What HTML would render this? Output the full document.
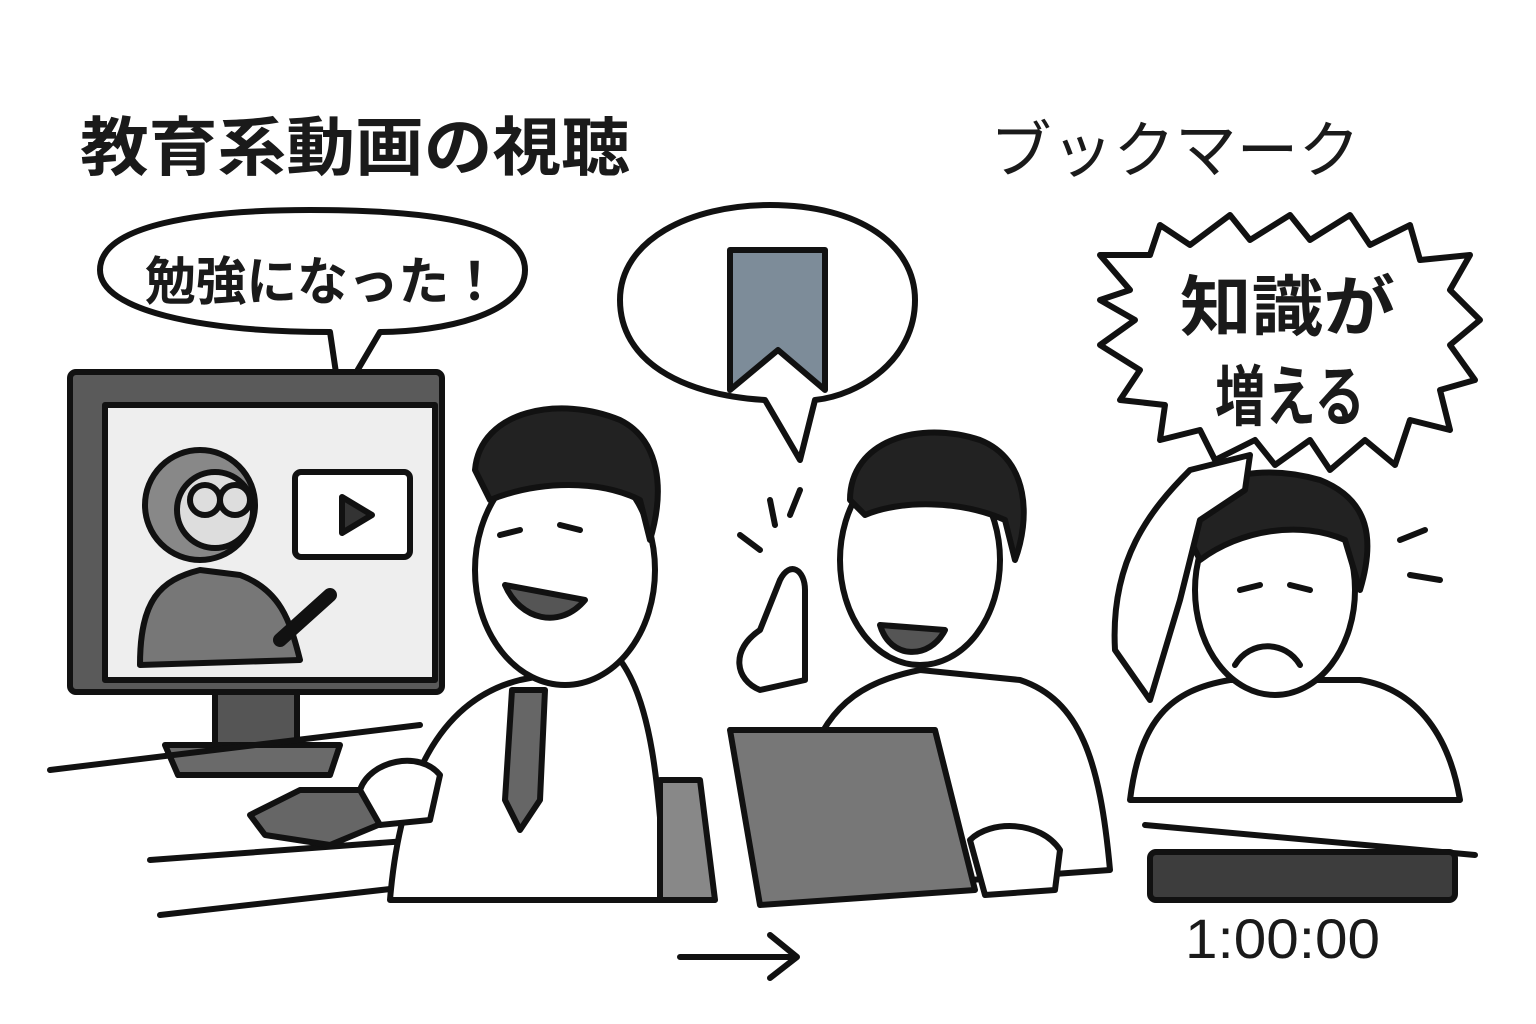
<!DOCTYPE html>
<html><head><meta charset="utf-8"><style>
html,body{margin:0;padding:0;background:#fff;}
svg{display:block}
text{font-family:"Liberation Sans","Noto Sans CJK JP",sans-serif;font-weight:bold;fill:#1a1a1a}
</style></head><body>
<svg width="1536" height="1024" viewBox="0 0 1536 1024" xmlns="http://www.w3.org/2000/svg">
<rect width="1536" height="1024" fill="#fff"/>
<g stroke="#111" stroke-width="6" stroke-linecap="round" stroke-linejoin="round" fill="none">
<!-- titles -->
</g>
<text x="80" y="170" font-size="64" textLength="550" lengthAdjust="spacingAndGlyphs">教育系動画の視聴</text>
<text x="990" y="172" font-size="62" font-weight="normal" textLength="370" lengthAdjust="spacingAndGlyphs" style="font-weight:normal">ブックマーク</text>

<g stroke="#111" stroke-width="6" stroke-linecap="round" stroke-linejoin="round">
<!-- left bubble -->
<path d="M330,332 C200,332 100,310 100,270 C100,225 200,210 310,210 C440,210 525,225 525,270 C525,315 440,332 380,332 L340,400 Z" fill="#fff"/>
<!-- middle bubble -->
<path d="M765,400 C680,395 620,360 620,300 C620,240 690,205 770,205 C860,205 915,245 915,300 C915,360 860,395 815,400 L800,460 Z" fill="#fff"/>
<path d="M730,250 L825,250 L825,390 L778,350 L730,390 Z" fill="#7d8c99"/>
<!-- spiky bubble -->
<path d="M1130,290 L1100,255 L1150,255 L1160,225 L1190,245 L1230,215 L1250,240 L1290,215 L1310,240 L1350,215 L1370,245 L1410,225 L1420,260 L1470,255 L1450,290 L1480,320 L1450,345 L1475,380 L1440,390 L1450,430 L1410,420 L1395,465 L1365,440 L1330,470 L1310,440 L1275,465 L1255,440 L1215,460 L1200,430 L1160,440 L1165,405 L1120,400 L1140,370 L1100,345 L1135,320 L1100,300 Z" fill="#fff"/>
<!-- monitor -->
<rect x="70" y="372" width="372" height="320" rx="6" fill="#5a5a5a"/>
<rect x="105" y="405" width="330" height="275" fill="#eee"/>
<rect x="215" y="692" width="82" height="55" fill="#555"/>
<path d="M165,745 L340,745 L330,775 L178,775 Z" fill="#6a6a6a"/>
<rect x="295" y="472" width="115" height="85" rx="6" fill="#fff"/>
<path d="M342,497 L342,533 L372,515 Z" fill="#333"/>
<!-- tutor -->
<path d="M140,665 C140,600 160,580 200,570 L240,575 C280,590 290,620 300,660 Z" fill="#777"/>
<circle cx="200" cy="505" r="55" fill="#888"/>
<circle cx="215" cy="510" r="38" fill="#ddd"/>
<circle cx="205" cy="500" r="15" fill="none"/><circle cx="235" cy="500" r="15" fill="none"/>
<path d="M280,640 L330,595" fill="none" stroke-width="14"/>
<!-- desk lines -->
<path d="M50,770 L420,725" fill="none"/>
<path d="M150,860 L420,840" fill="none"/><path d="M160,915 L470,880" fill="none"/>
<path d="M1145,825 L1475,855" fill="none"/>
<!-- person 1 -->
<path d="M390,900 C400,780 440,700 520,680 L620,660 C650,700 660,780 665,900 Z" fill="#fff"/>
<path d="M512,690 L545,690 L540,800 L520,830 L505,800 Z" fill="#666"/>
<ellipse cx="565" cy="570" rx="90" ry="115" fill="#fff"/>
<path d="M475,470 C480,410 560,395 620,420 C660,440 665,490 650,540 L640,500 C600,480 540,480 490,500 Z" fill="#222"/>
<path d="M505,585 C520,620 560,630 585,600 Z" fill="#555"/>
<path d="M500,535 L520,530 M560,525 L580,530" fill="none"/>
<path d="M250,815 L300,790 L360,790 L390,820 L330,845 L265,835 Z" fill="#666"/>
<path d="M360,790 C370,760 420,750 440,775 L430,820 L380,825 Z" fill="#fff"/>
<path d="M660,780 L700,780 L715,900 L660,900 Z" fill="#888"/>
<!-- person 2 -->
<path d="M810,760 C830,700 870,680 920,670 L1020,680 C1080,700 1100,760 1110,870 L970,880 Z" fill="#fff"/>
<ellipse cx="920" cy="560" rx="80" ry="105" fill="#fff"/>
<path d="M850,500 C850,440 920,420 980,440 C1030,460 1030,520 1015,560 L1005,520 C960,500 900,500 865,515 Z" fill="#222"/>
<path d="M880,625 C890,660 930,660 945,630 Z" fill="#555"/>
<path d="M780,580 C790,560 805,570 805,590 L805,680 L760,690 C735,680 730,650 760,630 Z" fill="#fff"/>
<path d="M730,730 L935,730 L975,890 L760,905 Z" fill="#777"/>
<path d="M970,840 C990,820 1040,820 1060,850 L1055,890 L985,895 Z" fill="#fff"/>
<path d="M740,535 L760,550 M770,500 L775,525 M800,490 L790,515" fill="none"/>
<!-- person 3 -->
<path d="M1130,800 C1140,720 1170,690 1230,680 L1360,680 C1420,690 1450,740 1460,800 Z" fill="#fff"/>
<ellipse cx="1275" cy="590" rx="80" ry="105" fill="#fff"/>
<path d="M1190,540 C1180,480 1250,460 1320,480 C1370,500 1375,540 1360,590 L1345,540 C1300,520 1240,530 1200,560 Z" fill="#222"/>
<path d="M1235,665 C1250,640 1285,640 1300,665" fill="none"/>
<path d="M1240,590 L1260,585 M1290,585 L1310,590" fill="none"/>
<path d="M1115,650 C1110,560 1150,510 1190,470 L1250,455 L1245,490 L1200,520 L1180,600 L1150,700 Z" fill="#fff"/>
<path d="M1400,540 L1425,530 M1410,575 L1440,580" fill="none"/>
<rect x="1150" y="852" width="305" height="48" rx="6" fill="#3d3d3d"/>
<!-- arrow -->
<path d="M680,957 L795,957 M770,935 L797,957 L770,978" fill="none"/>
</g>
<text x="145" y="300" font-size="52" textLength="355" lengthAdjust="spacingAndGlyphs">勉強になった！</text>
<text x="1180" y="330" font-size="66" textLength="215" lengthAdjust="spacingAndGlyphs">知識が</text>
<text x="1215" y="420" font-size="66" textLength="150" lengthAdjust="spacingAndGlyphs">増える</text>
<text x="1185" y="958" font-size="56" font-weight="normal" textLength="195" lengthAdjust="spacingAndGlyphs" style="font-weight:normal">1:00:00</text>
</svg>
</body></html>
